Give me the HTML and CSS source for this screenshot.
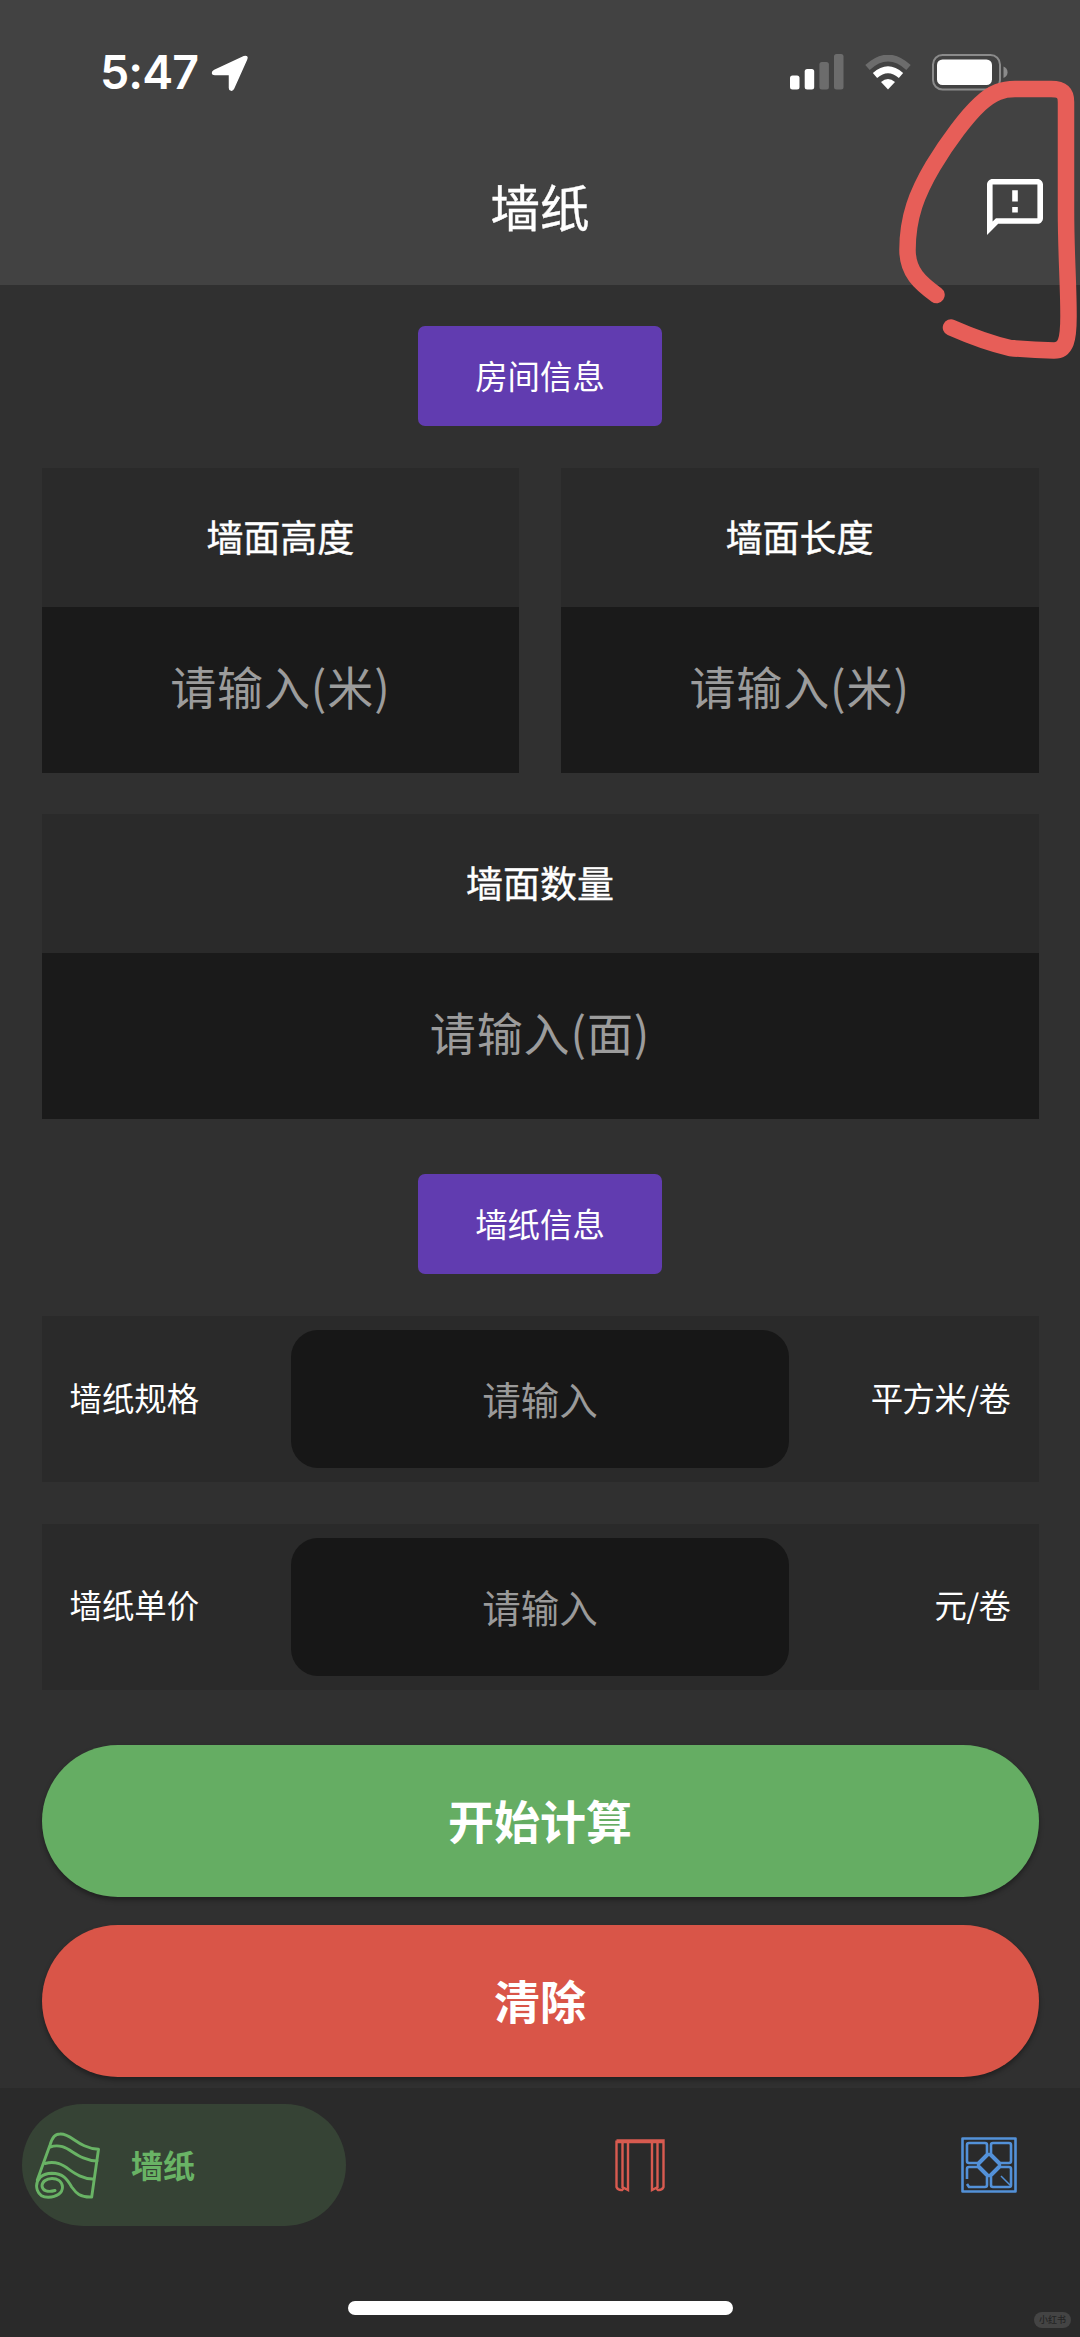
FILE: index.html
```html
<!DOCTYPE html>
<html lang="zh-CN">
<head>
<meta charset="utf-8">
<title>墙纸</title>
<link rel="stylesheet" href="styles.css">
</head>
<body>
<div class="app">
  <header class="header">
    <div class="status">
      <div class="status-left">
        <span class="time">5:47</span>
        <svg class="location" viewBox="0 0 38 38"><path d="M3.500 16.500 33 2.800C35.500 1.700 36.700 3 35.500 5.500L22.500 34.500C21.400 37 18.500 36.500 18.500 34V20.500H4C.8 20.500.8 17.800 3.500 16.500Z" fill="#fff" stroke="#fff" stroke-width="1.500" stroke-linejoin="round"/></svg>
      </div>
      <div class="status-right">
        <svg class="signal" viewBox="0 0 54 36"><rect x="0" y="21.500" width="9.500" height="14" rx="2.500" fill="#fff"/><rect x="14.700" y="15" width="9.500" height="20.500" rx="2.500" fill="#fff"/><rect x="29.400" y="8" width="9.500" height="27.500" rx="2.500" fill="#6c6c6c"/><rect x="44" y="0" width="9.500" height="35.500" rx="2.500" fill="#6c6c6c"/></svg>
        <svg class="wifi" viewBox="0 0 46 35"><path d="M2.500 12.500Q23-6.500 43.500 12.500" fill="none" stroke="#6c6c6c" stroke-width="6.500"/><path d="M10 20.500Q23 9 36 20.500" fill="none" stroke="#fff" stroke-width="6.500"/><path d="M16 27Q23 21 30 27L23 34.500Z" fill="#fff"/></svg>
        <svg class="battery" viewBox="0 0 76 37"><rect x="1" y="1" width="67" height="34.500" rx="9.500" fill="none" stroke="#8b8b8b" stroke-width="2"/><rect x="5" y="5.500" width="55" height="25.500" rx="5.500" fill="#fff"/><path d="M71.500 12.500Q75.500 14 75.500 18.300T71.500 24Z" fill="#8b8b8b"/></svg>
      </div>
    </div>
    <div class="titlebar">
      <h1 class="title">墙纸</h1>
      <svg class="feedback" viewBox="2 2 20 20"><path fill="#fff" d="M20 2H4c-1.100 0-2 .9-2 2v18l4-4h14c1.100 0 2-.9 2-2V4c0-1.100-.9-2-2-2zm0 14H5.200L4 17.200V4h16zM11 12h2v2h-2zM11 6h2v4h-2z"/></svg>
    </div>
    <svg class="scribble" viewBox="0 0 320 340"><path d="M176.500 265C160 253 147.500 242 147.500 220C147.500 187 157 163 173 136C188 111 207 86 220 74C233 62 243 59 255 59H291C302 59 306 63 306 72V180C306 225 308.500 252 308.500 286C308.500 310 306 320.500 294 320.500Q272 320 250 318Q224 312 191 297.500" fill="none" stroke="#e75e58" stroke-width="16.500" stroke-linecap="round" stroke-linejoin="round"/></svg>
  </header>

  <main class="content">
    <div class="chip">房间信息</div>
    <div class="pair">
      <section class="card"><div class="card-title">墙面高度</div><div class="field">请输入(米)</div></section>
      <section class="card"><div class="card-title">墙面长度</div><div class="field">请输入(米)</div></section>
    </div>
    <section class="card"><div class="card-title">墙面数量</div><div class="field">请输入(面)</div></section>
    <div class="chip chip-second">墙纸信息</div>
    <div class="row"><span class="label">墙纸规格</span><div class="row-field">请输入</div><span class="unit">平方米/卷</span></div>
    <div class="row"><span class="label">墙纸单价</span><div class="row-field">请输入</div><span class="unit">元/卷</span></div>
    <div class="button start">开始计算</div>
    <div class="button clear">清除</div>
  </main>

  <nav class="nav">
    <div class="tabs">
      <div class="tab active">
        <svg class="roll" viewBox="0 0 66 68" fill="none" stroke="#69b365" stroke-width="2.900" stroke-linejoin="round" stroke-linecap="round"><path d="M2.300 49 15 14C17.500 6 20 3 25 3C36 2 43 17 63.500 18.300L56.700 66C45 66.500 41 62 36.700 56C32 48 28 42.300 16.700 42.300Q10 42.500 5.500 46C-2 54 2 66.300 13.300 66.300C22 66 27.500 62 27.500 56C27 50 22 47.500 17 47.500C11 47.500 7 51 7 55C7.500 60 13 61.500 20 59.500"/><path d="M15 16C33 10 39 29 62 30M10 32.500C31 27 35 47 57.700 48"/></svg>
        <span>墙纸</span>
      </div>
      <svg class="curtain" viewBox="0 0 50 53" fill="none" stroke="#d85b50" stroke-width="2.400"><path d="M1.500 1.500H48.500V48Q47 51.500 43 51L41 49 37 51V3M1.500 1.500V48Q3 51.500 7 51L9 49 13 51V3M7.500 3V49M42.500 3V49M2 3H48"/></svg>
      <svg class="tiles" viewBox="0 0 56 56" fill="none" stroke="#5391d8" stroke-width="2.600" stroke-linejoin="round"><path d="M1.500 1.500H54.500V54.500H1.500Z"/><path d="M8 6H24Q26 6 26 8V17L17 26H8Q6 26 6 24V8Q6 6 8 6ZM32 6H48Q50 6 50 8V24Q50 26 48 26H39L30 17V8Q30 6 32 6ZM6 42V32Q6 30 8 30H17L26 39V48Q26 50 24 50H8L6 47M39 30H48Q50 30 50 32V48Q50 50 48 50H32Q30 50 30 48V39Z"/><path d="M28 17 39 28 28 39 17 28Z"/><path stroke-width="1.500" d="M40 39 49 48"/></svg>
    </div>
    <div class="home"></div>
    <div class="watermark">小红书</div>
  </nav>
</div>
</body>
</html>
```
FILE: styles.css
```css
* { box-sizing: border-box; }

body {
  margin: 0;
  background: #303030;
  color: #fff;
  font-family: "Noto Sans CJK SC", sans-serif;
}

svg { display: block; flex: none; }

.app {
  width: 1080px;
  height: 2337px;
  display: flex;
  flex-direction: column;
  overflow: hidden;
}

.header {
  position: relative;
  height: 285px;
  flex: none;
  background: #424242;
}

.status {
  height: 145px;
  padding: 0 72px 0 100px;
  display: flex;
  justify-content: space-between;
  align-items: center;
}

.status-left, .status-right { display: flex; align-items: center; }
.status-left { gap: 11px; }

.time {
  font: 600 46.500px/56px Inter, sans-serif;
  width: 100px;
  padding-bottom: 1px;
  letter-spacing: -0.9px;
}

.location { width: 38px; height: 38px; }
.status-right { margin-top: -1px; }
.signal { width: 54px; height: 36px; margin-right: 21px; }
.wifi { width: 46px; height: 35px; margin-right: 21px; }
.battery { width: 76px; height: 37px; }

.titlebar {
  height: 124px;
  padding: 0 37px;
  display: grid;
  grid-template-columns: 1fr auto 1fr;
  align-items: center;
}

.title {
  grid-column: 2;
  margin: 0;
  padding-bottom: 3px;
  font-size: 49.500px;
  font-weight: 400;
  line-height: 60px;
  -webkit-text-stroke: 0.4px #fff;
}

.feedback { width: 56px; height: 56px; justify-self: end; }

.scribble {
  position: absolute;
  left: 760px;
  top: 30px;
  width: 320px;
  height: 340px;
  overflow: visible;
  z-index: 2;
}

.content {
  height: 1803px;
  flex: none;
  padding: 41px 41.500px 0;
  display: flex;
  flex-direction: column;
}

.chip {
  width: 244px;
  height: 100px;
  flex: none;
  align-self: center;
  margin-bottom: 42px;
  display: flex;
  align-items: center;
  justify-content: center;
  border-radius: 7px;
  background: #613cb0;
  font-size: 32.400px;
  padding-bottom: 4px;
}

.chip-second { margin-top: 55px; }

.pair {
  display: grid;
  grid-template-columns: 1fr 1fr;
  gap: 41.500px;
  margin-bottom: 41px;
}

.card { height: 305px; background: #2a2a2a; }

.card-title, .field, .row-field, .button {
  display: flex;
  align-items: center;
  justify-content: center;
}

.card-title {
  height: 139px;
  padding-bottom: 4px;
  font-size: 37px;
  -webkit-text-stroke: 0.4px #fff;
}

.field {
  height: 166px;
  padding-bottom: 11px;
  background: #1a1a1a;
  color: #9c9c9c;
  font-size: 46px;
  letter-spacing: 0.9px;
}

.row {
  height: 166px;
  flex: none;
  margin-bottom: 41.500px;
  padding: 0 28px;
  display: grid;
  grid-template-columns: 1fr 498px 1fr;
  align-items: center;
  background: #2a2a2a;
  font-size: 32.400px;
}

.label, .unit { padding-bottom: 6px; }
.unit { text-align: right; letter-spacing: -0.5px; }

.row-field {
  height: 138px;
  padding-bottom: 2px;
  border-radius: 27px;
  background: #171717;
  color: #9a9a9a;
  font-size: 38.500px;
}

.button {
  height: 152.500px;
  flex: none;
  padding-bottom: 4px;
  border-radius: 77px;
  font-size: 46px;
  font-weight: 700;
  box-shadow: 0 3px 5px rgba(0, 0, 0, .35);
}

.start { margin-top: 13.500px; background: #65ad63; }
.clear { margin-top: 27.500px; background: #d95548; }

.nav {
  position: relative;
  height: 249px;
  flex: none;
  padding-top: 16px;
  background: #2a2a2a;
}

.tabs {
  height: 122px;
  padding: 0 63px 0 22px;
  display: flex;
  align-items: center;
  justify-content: space-between;
}

.tab {
  width: 324px;
  height: 122px;
  padding-left: 13px;
  display: flex;
  align-items: center;
  gap: 30px;
  border-radius: 61px;
  background: #364335;
  color: #69b365;
  font-size: 32px;
  font-weight: 700;
}

.tab span { padding-bottom: 2px; }
.roll { width: 66px; height: 68px; }
.curtain { width: 50px; height: 53px; margin-left: -28px; }
.tiles { width: 56px; height: 56px; }

.home {
  width: 385px;
  height: 14px;
  margin: 75px auto 0;
  border-radius: 7px;
  background: #fff;
}

.watermark {
  position: absolute;
  right: 9px;
  bottom: 9px;
  width: 37px;
  height: 16px;
  border-radius: 8px;
  background: #444;
  color: #242424;
  font-size: 9px;
  font-weight: 500;
  line-height: 16px;
  text-align: center;
}
```
